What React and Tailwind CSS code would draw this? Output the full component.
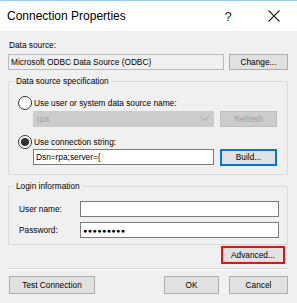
import React from "react";

const font = { fontFamily: '"Liberation Sans", Arial, sans-serif' };

function Radio({ checked }) {
  return (
    <span className="w-[14px] h-[14px] rounded-full border border-[#333333] bg-white flex items-center justify-center shrink-0">
      {checked && <span className="w-[8px] h-[8px] rounded-full bg-[#333333]" />}
    </span>
  );
}

function Btn({ children, className = "" }) {
  return (
    <div
      className={
        "flex items-center justify-center bg-[#e1e1e1] border border-[#adadad] text-[8.3px] text-black leading-none " +
        className
      }
    >
      {children}
    </div>
  );
}

export default function App() {
  return (
    <div
      className="w-[297px] h-[303px] overflow-hidden bg-[#f0f0f0] text-black text-[8.3px] leading-[11px]"
      style={font}
    >
      {/* title bar */}
      <div className="h-[1px] bg-[#9fcbf0]" />
      <div className="h-[30px] bg-white flex items-center">
        <div className="pl-[7px] text-[12px] leading-none text-black flex-1">Connection Properties</div>
        <div className="w-[8px] text-center text-[13px] leading-none text-[#222] mr-[36px]">?</div>
        <svg width="12" height="12" viewBox="0 0 12 12" className="mr-[17px]">
          <path d="M0.5 0.5 L11.5 11.5 M11.5 0.5 L0.5 11.5" stroke="#222" strokeWidth="1.1" fill="none" />
        </svg>
      </div>

      {/* body */}
      <div className="pl-[8px] pr-[9px] flex flex-col">
        <div className="pt-[9px] pl-[1px]">Data source:</div>
        <div className="mt-[3px] flex gap-[5px] h-[16px]">
          <div className="w-[216px] h-[16px] border border-[#b9b9b9] bg-[#f0f0f0] flex items-center pl-[2px] leading-none">
            Microsoft ODBC Data Source (ODBC)
          </div>
          <Btn className="flex-1 h-[16px]">Change...</Btn>
        </div>

        <fieldset className="mt-[5px] border border-[#dcdcdc] pl-[9px] pr-[10px] pt-[9px] pb-[8px]">
          <legend className="-ml-[4px] px-[2px] leading-[12px]">Data source specification</legend>
          <div className="flex items-center gap-[2px] h-[14px]">
            <Radio />
            <span>Use user or system data source name:</span>
          </div>
          <div className="mt-[1px] ml-[15px] flex gap-[6px] h-[16px]">
            <div className="w-[181px] h-[16px] bg-[#cccccc] border border-[#cccccc] flex items-center justify-between pl-[3px] pr-[4px] text-[#a2a2a2] leading-none">
              <span>rpa</span>
              <svg width="9" height="6" viewBox="0 0 9 6">
                <path d="M0.5 0.5 L4.5 4.5 L8.5 0.5" stroke="#a6a6a6" strokeWidth="1" fill="none" />
              </svg>
            </div>
            <div className="w-[57px] h-[16px] bg-[#cccccc] border border-[#bfbfbf] flex items-center justify-center text-[#a2a2a2] leading-none">
              Refresh
            </div>
          </div>
          <div className="mt-[8px] flex items-center gap-[2px] h-[14px]">
            <Radio checked />
            <span>Use connection string:</span>
          </div>
          <div className="ml-[15px] flex gap-[6px] items-start">
            <div className="w-[181px] h-[16px] bg-white border border-[#7a7a7a] flex items-center pl-[2px] leading-none">
              Dsn=rpa;server={"{"}
            </div>
            <Btn className="w-[57px] h-[17px] !border-[#0078d7] border-2">Build...</Btn>
          </div>
        </fieldset>

        <fieldset className="mt-[5px] border border-[#dcdcdc] pl-[10px] pr-[8px] pt-[9px] pb-[6px]">
          <legend className="-ml-[5px] px-[2px] leading-[12px]">Login information</legend>
          <div className="flex items-center h-[16px]">
            <span className="w-[61px]">User name:</span>
            <div className="flex-1 h-[16px] bg-white border border-[#7a7a7a]" />
          </div>
          <div className="mt-[5px] flex items-center h-[16px]">
            <span className="w-[61px]">Password:</span>
            <div className="flex-1 h-[16px] bg-white border border-[#7a7a7a] flex items-center pl-[2px] text-[7px] tracking-[0.5px] leading-none">
              ●●●●●●●●●
            </div>
          </div>
        </fieldset>

        <div className="mt-[1px] flex justify-end pr-[3px]">
          <Btn className="w-[64px] h-[18px] !border-[#e81010] border-2">Advanced...</Btn>
        </div>

        <div className="mt-[4px] h-[1px] bg-[#d5d5d5]" />
        <div className="h-[1px] bg-white" />

        <div className="mt-[6px] flex h-[18px]">
          <Btn className="ml-[1px] w-[86px] h-[18px]">Test Connection</Btn>
          <div className="flex-1" />
          <Btn className="w-[55px] h-[18px]">OK</Btn>
          <Btn className="ml-[10px] w-[59px] h-[18px]">Cancel</Btn>
        </div>
      </div>
    </div>
  );
}
